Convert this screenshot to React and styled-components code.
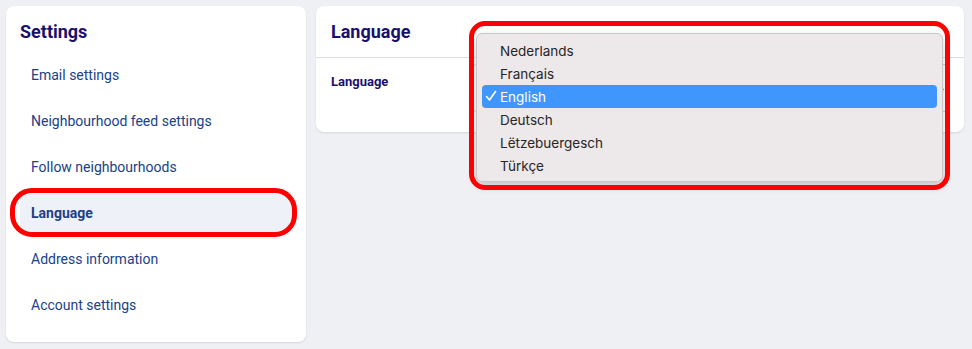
import React from "react";
import styled, { createGlobalStyle } from "styled-components";

const GlobalStyle = createGlobalStyle`
    body {
        margin: 0;
        background: #eff0f4;
        font-family: Roboto, "Liberation Sans", sans-serif;
    }
`;

const Page = styled.div`
    position: relative;
    display: flex;
    align-items: flex-start;
    gap: 10px;
    padding: 6px;
    height: 349px;
    box-sizing: border-box;
`;

const Card = styled.div`
    background: #ffffff;
    border-radius: 8px;
    box-shadow: 0 1px 2px rgba(30, 30, 60, 0.12);
`;

const Sidebar = styled(Card)`
    width: 300px;
    height: 336px;
    box-sizing: border-box;
    padding: 14px;
    display: flex;
    flex-direction: column;
`;

const SidebarTitle = styled.h2`
    margin: 0 0 12px;
    font-size: 18px;
    line-height: 24px;
    font-weight: 700;
    color: #1a106c;
`;

const NavList = styled.div`
    display: flex;
    flex-direction: column;
    gap: 8px;
`;

const NavItem = styled.div`
    position: relative;
    height: 38px;
    display: flex;
    align-items: center;
    padding-left: 11px;
    border-radius: 6px;
    font-size: 14px;
    color: #203f87;
    font-weight: ${(p) => (p.$active ? 700 : 400)};
    background: ${(p) => (p.$active ? "#eef2f8" : "transparent")};
`;

const Highlight = styled.div`
    position: absolute;
    box-sizing: border-box;
    border: 5px solid #ff0000;
    pointer-events: none;
`;

const NavRing = styled(Highlight)`
    left: -10px;
    right: -5px;
    top: -6px;
    bottom: -5px;
    border-radius: 22px;
`;

const Main = styled(Card)`
    width: 648px;
    height: 126px;
    display: flex;
    flex-direction: column;
`;

const MainHeader = styled.div`
    height: 51px;
    display: flex;
    align-items: center;
    padding: 0 15px;
    border-bottom: 1px solid #dcdce0;
    font-size: 18px;
    font-weight: 700;
    color: #1a106c;
`;

const FieldRow = styled.div`
    display: flex;
    align-items: flex-start;
    padding: 6px 14px 0 15px;
`;

const FieldLabel = styled.div`
    width: 140px;
    margin-top: 10px;
    font-size: 13px;
    line-height: 16px;
    font-weight: 700;
    color: #1a106c;
`;

const Select = styled.div`
    flex: 1;
    height: 48px;
    box-sizing: border-box;
    border: 1px solid #cfd0d6;
    border-radius: 6px;
    display: flex;
    align-items: center;
    justify-content: flex-end;
    padding-right: 5px;
    color: #333;
    font-size: 10px;
`;

const Menu = styled.div`
    position: absolute;
    left: 476px;
    top: 33px;
    width: 467px;
    height: 149px;
    box-sizing: border-box;
    padding: 5px 5px 6px;
    background: #ede8e9;
    border: 1px solid #c9c6c8;
    border-radius: 6px;
    box-shadow: 0 4px 10px rgba(0, 0, 0, 0.18);
    font-family: Inter, "Liberation Sans", sans-serif;
`;

const MenuItem = styled.div`
    height: 23px;
    display: flex;
    align-items: center;
    padding-left: 18px;
    position: relative;
    border-radius: 4px;
    font-size: 13.5px;
    color: ${(p) => (p.$selected ? "#ffffff" : "#262626")};
    background: ${(p) => (p.$selected ? "#3f97fd" : "transparent")};
`;

const Check = styled.span`
    position: absolute;
    left: 3px;
    top: 4px;
    display: flex;
`;

const MenuRing = styled(Highlight)`
    left: 469px;
    top: 21px;
    width: 481px;
    height: 169px;
    border-radius: 16px;
`;

const navItems = [
    "Email settings",
    "Neighbourhood feed settings",
    "Follow neighbourhoods",
    "Language",
    "Address information",
    "Account settings"
];

const languages = [
    "Nederlands",
    "Français",
    "English",
    "Deutsch",
    "Lëtzebuergesch",
    "Türkçe"
];

const App = () => (
    <>
        <GlobalStyle />
        <Page>
            <Sidebar>
                <SidebarTitle>Settings</SidebarTitle>
                <NavList>
                    {navItems.map((item) => (
                        <NavItem key={item} $active={item === "Language"}>
                            {item}
                            {item === "Language" && <NavRing />}
                        </NavItem>
                    ))}
                </NavList>
            </Sidebar>
            <Main>
                <MainHeader>Language</MainHeader>
                <FieldRow>
                    <FieldLabel>Language</FieldLabel>
                    <Select>◆</Select>
                </FieldRow>
            </Main>
            <Menu>
                {languages.map((lang) => (
                    <MenuItem key={lang} $selected={lang === "English"}>
                        {lang === "English" && (
                            <Check>
                                <svg width="12" height="14" viewBox="0 0 12 14">
                                    <path
                                        d="M1.5 7.5 L4.5 11 L10.5 2.5"
                                        fill="none"
                                        stroke="#fff"
                                        strokeWidth="1.6"
                                        strokeLinecap="round"
                                        strokeLinejoin="round"
                                    />
                                </svg>
                            </Check>
                        )}
                        {lang}
                    </MenuItem>
                ))}
            </Menu>
            <MenuRing />
        </Page>
    </>
);

export default App;
